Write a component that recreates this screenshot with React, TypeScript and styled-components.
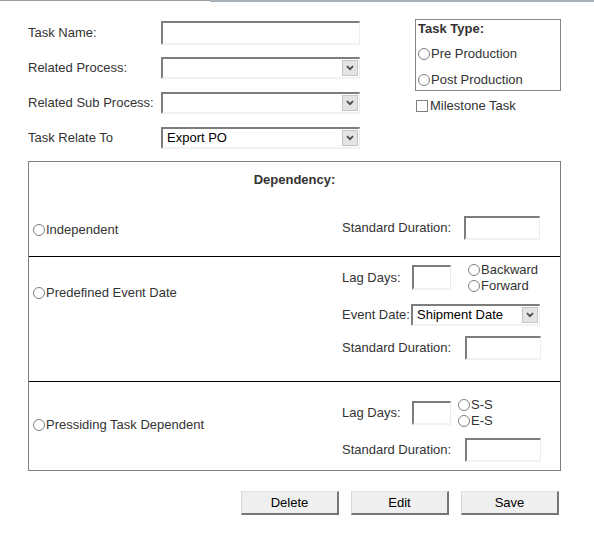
import React from "react";
import styled, { createGlobalStyle } from "styled-components";

const Global = createGlobalStyle`
  html, body { margin: 0; padding: 0; background: #fff; }
  body {
    font-family: "Liberation Sans", Arial, sans-serif;
    font-size: 13px;
    color: #333;
  }
  * { box-sizing: border-box; }
`;

const Page = styled.div`
  width: 594px;
  height: 535px;
  overflow: hidden;
`;

const TopStrip = styled.div`
  display: flex;
  height: 2px;
`;
const StripLeft = styled.div`
  width: 210px;
  border-top: 1px solid #9c9c9c;
`;
const StripRight = styled.div`
  flex: 1;
  background: #a9b1b8;
`;

const Content = styled.div`
  padding: 13px 0 0 28px;
`;

const TopForm = styled.div`
  display: flex;
  align-items: flex-start;
`;

const FormCol = styled.div`
  width: 332px;
  display: flex;
  flex-direction: column;
`;

const FormRow = styled.div`
  display: flex;
  align-items: center;
  height: 35px;
`;

const FormLabel = styled.label<{ $w: number }>`
  width: ${(p) => p.$w}px;
  flex: none;
  line-height: 16px;
  white-space: nowrap;
`;

const TextBox = styled.input<{ $w: number; $h?: number }>`
  width: ${(p) => p.$w}px;
  height: ${(p) => p.$h ?? 24}px;
  flex: none;
  margin: 0;
  padding: 0 4px;
  border-style: solid;
  border-width: 2px 1px 2px 2px;
  border-color: #7d7d7d #ececec #f2f2f2 #7d7d7d;
  background: #fff;
  font: inherit;
  color: #000;
  outline: none;
`;

const SelectBox = styled.div<{ $w: number }>`
  width: ${(p) => p.$w}px;
  height: 22px;
  flex: none;
  display: flex;
  align-items: center;
  border-style: solid;
  border-width: 2px 1px 2px 2px;
  border-color: #7d7d7d #ececec #f2f2f2 #7d7d7d;
  background: #fff;
  color: #000;
`;

const SelectValue = styled.span`
  flex: 1;
  padding-left: 4px;
  line-height: 16px;
  white-space: nowrap;
  overflow: hidden;
`;

const SelectArrow = styled.span`
  width: 16px;
  height: 16px;
  margin-right: 1px;
  flex: none;
  display: flex;
  align-items: center;
  justify-content: center;
  background: #e4e4e4;
  border: 1px solid #c6c6c6;
`;

const Chevron = () => (
  <svg width="8" height="6" viewBox="0 0 8 6">
    <path d="M1 1.2 L4 4.2 L7 1.2" fill="none" stroke="#4a4a4a" strokeWidth="1.8" />
  </svg>
);

const Select = ({ w, value }: { w: number; value?: string }) => (
  <SelectBox $w={w}>
    <SelectValue>{value ?? ""}</SelectValue>
    <SelectArrow>
      <Chevron />
    </SelectArrow>
  </SelectBox>
);

const RightCol = styled.div`
  margin-left: 55px;
  padding-top: 4px;
  display: flex;
  flex-direction: column;
`;

const TypeBox = styled.div`
  width: 146px;
  height: 72px;
  border: 1px solid #858585;
  padding: 0 0 0 2px;
  display: flex;
  flex-direction: column;
`;

const TypeTitle = styled.div`
  font-weight: bold;
  line-height: 18px;
`;

const Option = styled.label<{ $mt?: number }>`
  display: flex;
  align-items: center;
  line-height: 16px;
  margin-top: ${(p) => p.$mt ?? 0}px;
  white-space: nowrap;
`;

const RadioInput = styled.input.attrs({ type: "radio" })`
  appearance: none;
  -webkit-appearance: none;
  margin: 0 1px 0 0;
  width: 12px;
  height: 12px;
  flex: none;
  border: 1px solid #7f7f7f;
  border-radius: 50%;
  background: #fff;
`;

const CheckInput = styled.input.attrs({ type: "checkbox" })`
  appearance: none;
  -webkit-appearance: none;
  margin: 0 2px 0 1px;
  width: 12px;
  height: 12px;
  flex: none;
  border: 1px solid #7f7f7f;
  background: #fff;
`;

const DepBox = styled.div`
  margin-top: 6px;
  width: 533px;
  border: 1px solid #808080;
`;

const Section = styled.div<{ $pt: number; $pb: number; $divider?: boolean }>`
  padding-top: ${(p) => p.$pt}px;
  padding-bottom: ${(p) => p.$pb}px;
  border-top: ${(p) => (p.$divider ? "1px solid #000" : "none")};
`;

const DepHeader = styled.div`
  text-align: center;
  font-weight: bold;
  line-height: 16px;
  margin-bottom: 28px;
`;

const SectionGrid = styled.div`
  display: grid;
  grid-template-columns: 313px 1fr;
`;

const LeftCell = styled.div<{ $pt: number }>`
  padding-left: 4px;
  padding-top: ${(p) => p.$pt}px;
`;

const RightCell = styled.div`
  display: flex;
  flex-direction: column;
`;

const FieldRow = styled.div<{ $mt?: number; $h: number }>`
  display: flex;
  align-items: center;
  height: ${(p) => p.$h}px;
  margin-top: ${(p) => p.$mt ?? 0}px;
`;

const RadioStack = styled.div<{ $ml: number }>`
  margin-left: ${(p) => p.$ml}px;
  display: flex;
  flex-direction: column;
`;

const ButtonRow = styled.div`
  width: 531px;
  margin-top: 20px;
  display: flex;
  justify-content: flex-end;
  gap: 12px;
`;

const Button = styled.button`
  width: 98px;
  height: 24px;
  margin: 0;
  padding: 0;
  background: #efefef;
  border-style: solid;
  border-width: 1px 2px 2px 1px;
  border-color: #e2e2e2 #767676 #767676 #d6d6d6;
  font: inherit;
  color: #000;
`;

export default function App() {
  return (
    <Page>
      <Global />
      <TopStrip>
        <StripLeft />
        <StripRight />
      </TopStrip>
      <Content>
        <TopForm>
          <FormCol>
            <FormRow>
              <FormLabel $w={133}>Task Name:</FormLabel>
              <TextBox $w={199} />
            </FormRow>
            <FormRow>
              <FormLabel $w={133}>Related Process:</FormLabel>
              <Select w={199} />
            </FormRow>
            <FormRow>
              <FormLabel $w={133}>Related Sub Process:</FormLabel>
              <Select w={199} />
            </FormRow>
            <FormRow>
              <FormLabel $w={133}>Task Relate To</FormLabel>
              <Select w={199} value="Export PO" />
            </FormRow>
          </FormCol>
          <RightCol>
            <TypeBox>
              <TypeTitle>Task Type:</TypeTitle>
              <Option $mt={8}>
                <RadioInput name="tasktype" />
                Pre Production
              </Option>
              <Option $mt={10}>
                <RadioInput name="tasktype" />
                Post Production
              </Option>
            </TypeBox>
            <Option $mt={7}>
              <CheckInput />
              Milestone Task
            </Option>
          </RightCol>
        </TopForm>

        <DepBox>
          <Section $pt={10} $pb={16}>
            <DepHeader>Dependency:</DepHeader>
            <SectionGrid>
              <LeftCell $pt={6}>
                <Option>
                  <RadioInput name="dep" />
                  Independent
                </Option>
              </LeftCell>
              <RightCell>
                <FieldRow $h={24}>
                  <FormLabel $w={122}>Standard Duration:</FormLabel>
                  <TextBox $w={76} />
                </FieldRow>
              </RightCell>
            </SectionGrid>
          </Section>

          <Section $pt={8} $pb={21} $divider>
            <SectionGrid>
              <LeftCell $pt={20}>
                <Option>
                  <RadioInput name="dep" />
                  Predefined Event Date
                </Option>
              </LeftCell>
              <RightCell>
                <FieldRow $h={25}>
                  <FormLabel $w={70}>Lag Days:</FormLabel>
                  <TextBox $w={39} $h={25} />
                  <RadioStack $ml={17}>
                    <Option>
                      <RadioInput name="dir" />
                      Backward
                    </Option>
                    <Option>
                      <RadioInput name="dir" />
                      Forward
                    </Option>
                  </RadioStack>
                </FieldRow>
                <FieldRow $h={22} $mt={14}>
                  <FormLabel $w={69}>Event Date:</FormLabel>
                  <Select w={129} value="Shipment Date" />
                </FieldRow>
                <FieldRow $h={24} $mt={10}>
                  <FormLabel $w={123}>Standard Duration:</FormLabel>
                  <TextBox $w={76} />
                </FieldRow>
              </RightCell>
            </SectionGrid>
          </Section>

          <Section $pt={19} $pb={8} $divider>
            <SectionGrid>
              <LeftCell $pt={16}>
                <Option>
                  <RadioInput name="dep" />
                  Pressiding Task Dependent
                </Option>
              </LeftCell>
              <RightCell>
                <FieldRow $h={24}>
                  <FormLabel $w={70}>Lag Days:</FormLabel>
                  <TextBox $w={39} />
                  <RadioStack $ml={7}>
                    <Option>
                      <RadioInput name="rel" />
                      S-S
                    </Option>
                    <Option>
                      <RadioInput name="rel" />
                      E-S
                    </Option>
                  </RadioStack>
                </FieldRow>
                <FieldRow $h={24} $mt={13}>
                  <FormLabel $w={123}>Standard Duration:</FormLabel>
                  <TextBox $w={76} />
                </FieldRow>
              </RightCell>
            </SectionGrid>
          </Section>
        </DepBox>

        <ButtonRow>
          <Button>Delete</Button>
          <Button>Edit</Button>
          <Button>Save</Button>
        </ButtonRow>
      </Content>
    </Page>
  );
}
